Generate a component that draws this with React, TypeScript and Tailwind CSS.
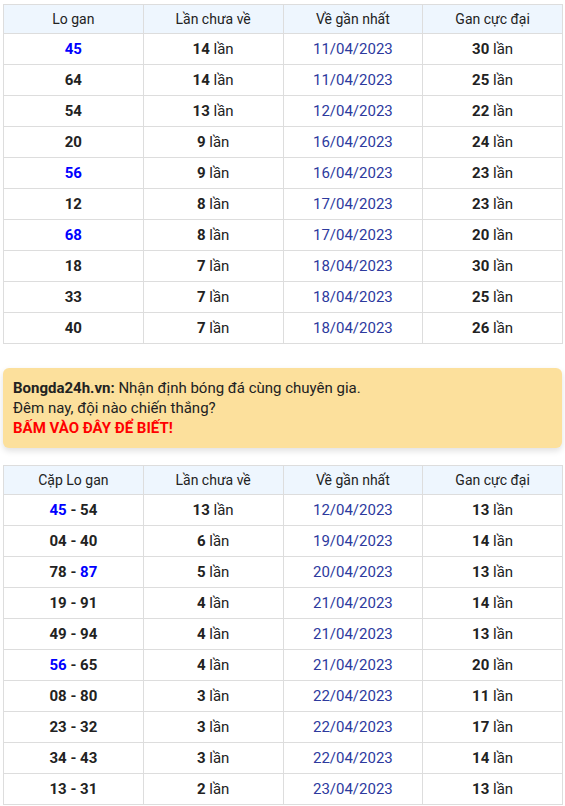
import React from "react";

type Row = { a: React.ReactNode; b: number; c: string; d: number };

const B = ({ children }: { children: React.ReactNode }) => (
  <span className="text-[#0000ff]">{children}</span>
);

const rows1: Row[] = [
  { a: <B>45</B>, b: 14, c: "11/04/2023", d: 30 },
  { a: "64", b: 14, c: "11/04/2023", d: 25 },
  { a: "54", b: 13, c: "12/04/2023", d: 22 },
  { a: "20", b: 9, c: "16/04/2023", d: 24 },
  { a: <B>56</B>, b: 9, c: "16/04/2023", d: 23 },
  { a: "12", b: 8, c: "17/04/2023", d: 23 },
  { a: <B>68</B>, b: 8, c: "17/04/2023", d: 20 },
  { a: "18", b: 7, c: "18/04/2023", d: 30 },
  { a: "33", b: 7, c: "18/04/2023", d: 25 },
  { a: "40", b: 7, c: "18/04/2023", d: 26 },
];

const rows2: Row[] = [
  { a: <><B>45</B> - 54</>, b: 13, c: "12/04/2023", d: 13 },
  { a: "04 - 40", b: 6, c: "19/04/2023", d: 14 },
  { a: <>78 - <B>87</B></>, b: 5, c: "20/04/2023", d: 13 },
  { a: "19 - 91", b: 4, c: "21/04/2023", d: 14 },
  { a: "49 - 94", b: 4, c: "21/04/2023", d: 13 },
  { a: <><B>56</B> - 65</>, b: 4, c: "21/04/2023", d: 20 },
  { a: "08 - 80", b: 3, c: "22/04/2023", d: 11 },
  { a: "23 - 32", b: 3, c: "22/04/2023", d: 17 },
  { a: "34 - 43", b: 3, c: "22/04/2023", d: 14 },
  { a: "13 - 31", b: 2, c: "23/04/2023", d: 13 },
];

function Table({ first, rows }: { first: string; rows: Row[] }) {
  const th = "border border-[#dddddd] h-[29px] p-0 font-normal text-[14px] text-[#222]";
  const td = "border border-[#dddddd] h-[31px] p-0 text-center text-[15px]";
  return (
    <table className="w-[560px] table-fixed border-collapse">
      <thead>
        <tr className="bg-[#eef6fe]">
          <th className={th}>{first}</th>
          <th className={th}>Lần chưa về</th>
          <th className={th}>Về gần nhất</th>
          <th className={th}>Gan cực đại</th>
        </tr>
      </thead>
      <tbody>
        {rows.map((r, i) => (
          <tr key={i}>
            <td className={td + " font-bold text-[#222]"}>{r.a}</td>
            <td className={td + " text-[#222]"}>
              <b>{r.b}</b> lần
            </td>
            <td className={td + " text-[#2d3a9e]"}>{r.c}</td>
            <td className={td + " text-[#222]"}>
              <b>{r.d}</b> lần
            </td>
          </tr>
        ))}
      </tbody>
    </table>
  );
}

export default function App() {
  return (
    <div
      className="w-[565px] bg-white px-[3px] pt-[4px]"
      style={{ fontFamily: "Roboto, 'Noto Sans', sans-serif" }}
    >
      <Table first="Lo gan" rows={rows1} />
      <div className="mt-[24px] mb-[17px] rounded-[6px] bg-[#fce09c] px-[10px] py-[10px] text-[15px] leading-[20px] text-[#222] shadow-[0_3px_6px_rgba(0,0,0,0.12)]">
        <div>
          <b>Bongda24h.vn:</b> Nhận định bóng đá cùng chuyên gia.
        </div>
        <div>Đêm nay, đội nào chiến thắng?</div>
        <div className="font-bold text-[#ff0000]">BẤM VÀO ĐÂY ĐỂ BIẾT!</div>
      </div>
      <Table first="Cặp Lo gan" rows={rows2} />
    </div>
  );
}
